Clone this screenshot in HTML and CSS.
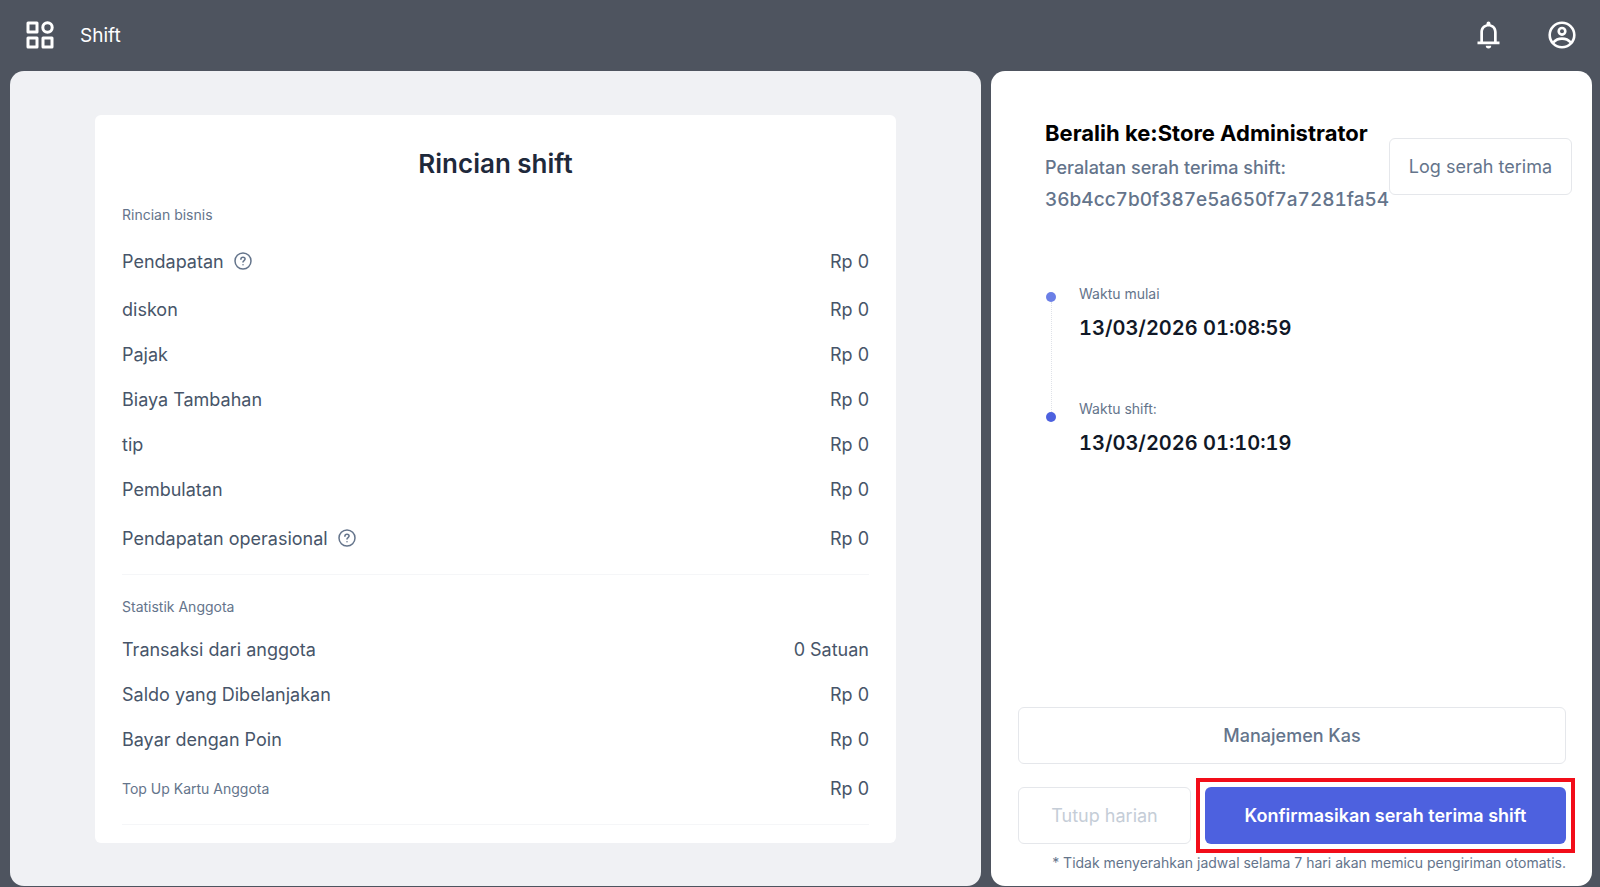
FILE: index.html
```html
<!DOCTYPE html>
<html lang="id">
<head>
    <meta charset="UTF-8">
    <meta name="viewport" content="width=device-width, initial-scale=1.0">
    <title>Shift</title>
    <link rel="stylesheet" href="styles.css">
</head>
<body>
    <header class="topbar">
        <button class="icon-btn" type="button" aria-label="Menu">
            <svg width="28" height="28" viewBox="0 0 28 28" fill="none" stroke="currentColor" stroke-width="3" stroke-linejoin="round">
                <rect x="2" y="2" width="9" height="9"/>
                <circle cx="21.5" cy="6.5" r="4.7"/>
                <rect x="2" y="17" width="9" height="9"/>
                <rect x="17" y="17" width="9" height="9"/>
            </svg>
        </button>
        <h1>Shift</h1>
        <div class="topbar-actions">
            <button class="icon-btn" type="button" aria-label="Notifikasi">
                <svg width="28" height="28" viewBox="0 0 28 28" fill="currentColor">
                    <path d="M14.500 0.500a2 2 0 0 0-2 2v.7C8.700 4.100 6.300 7.100 6.300 11v9.500H3.500v2.700h22v-2.700h-2.800V11c0-3.900-2.400-6.900-6.200-7.800v-.7a2 2 0 0 0-2-2zM14.500 5.600c3.300 0 5.500 2.400 5.500 5.600v9.300h-11v-9.300c0-3.200 2.200-5.600 5.500-5.600z"/>
                    <path d="M11.800 24.800h5.400a2.700 2.700 0 0 1-5.400 0z"/>
                </svg>
            </button>
            <button class="icon-btn" type="button" aria-label="Akun">
                <svg width="28" height="28" viewBox="0 0 28 28" fill="none" stroke="currentColor" stroke-width="2.600">
                    <circle cx="14" cy="14" r="12.300"/>
                    <circle cx="14" cy="10.300" r="3.300"/>
                    <path d="M5.200 21.500c2.300-2.600 5.300-3.900 8.800-3.900s6.500 1.300 8.800 3.900"/>
                </svg>
            </button>
        </div>
    </header>

    <main class="layout">
        <section class="panel panel-detail">
            <div class="card">
                <h2>Rincian shift</h2>

                <h3>Rincian bisnis</h3>
                <dl class="rows">
                    <div class="row row-tall">
                        <dt>Pendapatan
                            <svg class="help" width="18" height="18" viewBox="0 0 18 18" fill="none" stroke="currentColor" stroke-width="1.500" stroke-linecap="round">
                                <circle cx="9" cy="9" r="8"/>
                                <path d="M6.900 7.200c0-1.200.9-2 2.100-2s2.100.8 2.100 1.900c0 1.400-2.100 1.500-2.100 3"/>
                                <path d="M9 12.700v.1"/>
                            </svg>
                        </dt>
                        <dd>Rp 0</dd>
                    </div>
                    <div class="row"><dt>diskon</dt><dd>Rp 0</dd></div>
                    <div class="row"><dt>Pajak</dt><dd>Rp 0</dd></div>
                    <div class="row"><dt>Biaya Tambahan</dt><dd>Rp 0</dd></div>
                    <div class="row"><dt>tip</dt><dd>Rp 0</dd></div>
                    <div class="row"><dt>Pembulatan</dt><dd>Rp 0</dd></div>
                    <div class="row row-tall">
                        <dt>Pendapatan operasional
                            <svg class="help" width="18" height="18" viewBox="0 0 18 18" fill="none" stroke="currentColor" stroke-width="1.500" stroke-linecap="round">
                                <circle cx="9" cy="9" r="8"/>
                                <path d="M6.900 7.200c0-1.200.9-2 2.100-2s2.100.8 2.100 1.900c0 1.400-2.100 1.500-2.100 3"/>
                                <path d="M9 12.700v.1"/>
                            </svg>
                        </dt>
                        <dd>Rp 0</dd>
                    </div>
                </dl>

                <h3>Statistik Anggota</h3>
                <dl class="rows">
                    <div class="row"><dt>Transaksi dari anggota</dt><dd>0 Satuan</dd></div>
                    <div class="row"><dt>Saldo yang Dibelanjakan</dt><dd>Rp 0</dd></div>
                    <div class="row"><dt>Bayar dengan Poin</dt><dd>Rp 0</dd></div>
                    <div class="row row-tall"><dt class="muted">Top Up Kartu Anggota</dt><dd>Rp 0</dd></div>
                </dl>
            </div>
        </section>

        <section class="panel panel-shift">
            <div class="shift-head">
                <div class="shift-info">
                    <h2>Beralih ke:Store Administrator</h2>
                    <p>Peralatan serah terima shift:</p>
                    <p class="device-id">36b4cc7b0f387e5a650f7a7281fa54</p>
                </div>
                <button class="btn btn-log" type="button">Log serah terima</button>
            </div>

            <div class="timeline">
                <div class="rail">
                    <span class="dot dot-start"></span>
                    <span class="line"></span>
                    <span class="dot"></span>
                </div>
                <dl class="times">
                    <div>
                        <dt>Waktu mulai</dt>
                        <dd>13/03/2026 01:08:59</dd>
                    </div>
                    <div>
                        <dt>Waktu shift:</dt>
                        <dd>13/03/2026 01:10:19</dd>
                    </div>
                </dl>
            </div>

            <div class="actions">
                <button class="btn btn-medium" type="button">Manajemen Kas</button>
                <div class="actions-row">
                    <button class="btn" type="button" disabled>Tutup harian</button>
                    <button class="btn btn-primary" type="button">Konfirmasikan serah terima shift</button>
                </div>
                <p class="note">* Tidak menyerahkan jadwal selama 7 hari akan memicu pengiriman otomatis.</p>
            </div>
        </section>
    </main>
</body>
</html>
```
FILE: styles.css
```css
* {
    box-sizing: border-box;
}
body {
    margin: 0;
    min-height: 100vh;
    display: flex;
    flex-direction: column;
    background-color: #4e545f;
    color: #475569;
    font-family: Inter, "Liberation Sans", sans-serif;
    font-size: 18px;
}
h1, h2, h3, p, dl, dd {
    margin: 0;
}
button {
    font-family: inherit;
    cursor: pointer;
}

/* top bar */
.topbar {
    display: flex;
    align-items: center;
    height: 71px;
    padding: 0 24px 1px 26px;
    color: white;
}
.topbar h1 {
    margin-left: 26px;
    font-size: 19px;
    font-weight: 400;
}
.topbar-actions {
    display: flex;
    gap: 46px;
    margin-left: auto;
}
.icon-btn {
    display: flex;
    padding: 0;
    border: none;
    background: none;
    color: white;
}

/* two panels */
.layout {
    flex: 1;
    display: grid;
    grid-template-columns: minmax(0, 971fr) minmax(0, 601fr);
    gap: 10px;
    padding: 0 8px 1px 10px;
}
.panel {
    border-radius: 14px;
    background-color: white;
}
.panel-detail {
    padding: 44px 85px 43px;
    background-color: #f0f1f4;
}
.card {
    padding: 33px 27px 18px;
    border-radius: 6px;
    background-color: white;
}
.card h2 {
    margin-bottom: 25px;
    color: #1e293b;
    font-size: 26px;
    font-weight: 600;
    line-height: 32px;
    text-align: center;
}
.card h3 {
    margin-bottom: 10px;
    color: #64748b;
    font-size: 14px;
    font-weight: 400;
    line-height: 20px;
}
.rows {
    padding-bottom: 10px;
    border-bottom: 1px solid #f5f6f8;
}
.rows + h3 {
    margin-top: 22px;
}
.row {
    display: flex;
    align-items: center;
    justify-content: space-between;
    height: 45px;
}
.row-tall {
    height: 52px;
}
.row dt {
    display: flex;
    align-items: center;
    gap: 10px;
}
.row .muted {
    color: #64748b;
    font-size: 14px;
}
.help {
    color: #64748b;
}

/* right side */
.panel-shift {
    display: flex;
    flex-direction: column;
}
.shift-head {
    display: flex;
    align-items: center;
    justify-content: space-between;
    padding: 46px 20px 0 54px;
}
.shift-info {
    min-width: 0;
    color: #64748b;
    font-weight: 500;
    line-height: 32px;
}
.shift-info h2 {
    margin-bottom: 3px;
    color: black;
    font-size: 22px;
    font-weight: 700;
    white-space: nowrap;
}
.device-id {
    font-size: 19px;
    font-variant-numeric: tabular-nums;
}
.btn {
    height: 57px;
    border: 1px solid #e5e7eb;
    border-radius: 6px;
    background-color: white;
    color: #64748b;
    font-size: 18px;
    white-space: nowrap;
}
.btn:disabled {
    color: #c5cdd7;
    cursor: default;
}
.btn-log {
    flex-shrink: 0;
    padding: 0 19px;
}
.btn-medium {
    font-weight: 500;
}
.btn-primary {
    position: relative;
    border: none;
    background-color: #4d61df;
    color: white;
    font-weight: 600;
}
/* red frame marks the button to press */
.btn-primary::after {
    content: "";
    position: absolute;
    inset: -9px;
    border: 4px solid #f20d19;
    pointer-events: none;
}
.timeline {
    display: flex;
    gap: 23px;
    margin-top: 68px;
    padding-left: 55px;
}
.rail {
    display: flex;
    flex-direction: column;
    align-items: center;
    height: 138px;
    padding-top: 8px;
}
.dot {
    width: 10px;
    height: 10px;
    border-radius: 50%;
    background-color: #4d61df;
}
.dot-start {
    background-color: #6b7fe6;
}
.line {
    flex: 1;
    border-left: 1px dotted #dfe2e8;
}
.times div {
    height: 115px;
}
.times dt {
    margin-bottom: 10px;
    color: #64748b;
    font-size: 14px;
    line-height: 20px;
}
.times dd {
    color: #111827;
    font-size: 20px;
    font-weight: 600;
    font-variant-numeric: tabular-nums;
    line-height: 28px;
}
.actions {
    display: flex;
    flex-direction: column;
    gap: 23px;
    margin-top: auto;
    padding: 0 26px 13px 27px;
}
.actions-row {
    display: grid;
    grid-template-columns: 173fr 361fr;
    gap: 14px;
}
.note {
    margin-top: -14px;
    color: #64748b;
    font-size: 14px;
    line-height: 20px;
    text-align: right;
}
```
